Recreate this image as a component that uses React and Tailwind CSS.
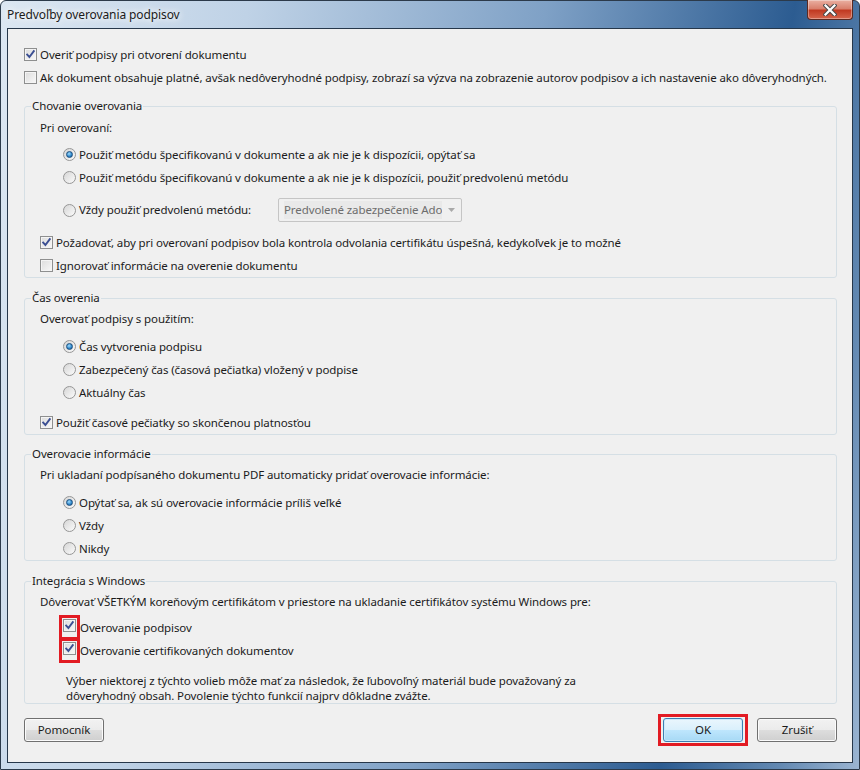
import React from 'react';

const Checkbox = ({ checked }) => (
  <span className="relative inline-block w-[13px] h-[13px] shrink-0 border border-[#8e8f8f] bg-[linear-gradient(135deg,#dcdcdc,#f8f8f8)] shadow-[inset_0_0_0_1px_#f4f4f4]">
    {checked && (
      <svg className="absolute left-0 top-0" width="11" height="11" viewBox="0 0 11 11">
        <path d="M2.2 5.6 L4.4 8 L8.8 2.2" fill="none" stroke="#3b4f93" strokeWidth="1.9" strokeLinecap="square" />
      </svg>
    )}
  </span>
);

const Radio = ({ checked }) => (
  <span className="relative inline-flex items-center justify-center w-[13px] h-[13px] shrink-0 rounded-full border border-[#969696] bg-[linear-gradient(135deg,#d6d6d6,#fbfbfb)]">
    {checked && (
      <span className="w-[7px] h-[7px] rounded-full border border-[#1c4f7e] bg-[radial-gradient(circle_at_40%_35%,#9fdcff,#2d85c8_60%,#15538f)]" />
    )}
  </span>
);

const Row = ({ children, className = '' }) => (
  <div className={`flex items-center h-[23px] whitespace-nowrap ${className}`}>{children}</div>
);

const CheckRow = ({ checked, label, className = '' }) => (
  <Row className={className}>
    <Checkbox checked={checked} />
    <span className="ml-[3px]">{label}</span>
  </Row>
);

const RadioRow = ({ checked, label, className = '' }) => (
  <Row className={`pl-[23px] ${className}`}>
    <Radio checked={checked} />
    <span className="ml-[3px]">{label}</span>
  </Row>
);

const Group = ({ title, children, className = '' }) => (
  <fieldset className={`border border-[#d5dfe5] rounded-[3px] pl-[15px] ${className}`}>
    <legend className="ml-[-9px] px-[1px] leading-[16px]">{title}</legend>
    {children}
  </fieldset>
);

const Button = ({ children, primary }) => (
  <button
    className={
      primary
        ? 'w-[80px] h-[24px] rounded-[3px] border border-[#3c7fb1] bg-[linear-gradient(#eaf6fd_0%,#d9f0fc_50%,#bee6fd_51%,#a7d9f5_100%)] shadow-[inset_0_0_0_1px_#cbeafc] text-[#1b1b1b]'
        : 'w-[80px] h-[24px] rounded-[3px] border border-[#707070] bg-[linear-gradient(#f2f2f2_0%,#ebebeb_50%,#dddddd_51%,#cfcfcf_100%)] shadow-[inset_0_0_0_1px_#fbfbfb] text-[#1b1b1b]'
    }
  >
    {children}
  </button>
);

export default function App() {
  return (
    <div className="w-[860px] h-[770px] flex flex-col font-['Noto_Sans',sans-serif] text-[11.5px] tracking-[-0.1px] text-[#1b1b1b] bg-[linear-gradient(100deg,#dce7f2_0%,#bfd2e6_25%,#7fa1c6_55%,#2c5c91_80%,#6389b2_92%,#9bb5d2_100%)] border border-[#2c3a4a] rounded-t-[6px]">
      {/* Title bar */}
      <div className="relative h-[27px] flex items-center pl-[6px]">
        <span className="text-[12px] [text-shadow:0_0_6px_#fff,0_0_10px_#fff]">Predvoľby overovania podpisov</span>
        <div className="absolute right-[6px] top-[-1px] w-[46px] h-[20px] rounded-b-[4px] border border-[#5b2a22] border-t-0 bg-[linear-gradient(#eab0a2_0%,#d9806d_45%,#c13a22_55%,#d5654c_100%)] shadow-[inset_0_0_0_1px_rgba(255,255,255,0.35)] flex items-center justify-center">
          <svg width="14" height="12" viewBox="0 0 14 12">
            <path d="M2.5 1.5 L11.5 10.5 M11.5 1.5 L2.5 10.5" stroke="#4a4a4a" strokeWidth="4.2" strokeLinecap="square" />
            <path d="M2.5 1.5 L11.5 10.5 M11.5 1.5 L2.5 10.5" stroke="#ffffff" strokeWidth="2.2" strokeLinecap="square" />
          </svg>
        </div>
      </div>

      {/* Client area */}
      <div className="flex-1 mx-[6px] mb-[6px] border border-[#26374a] bg-[#f0f0f0] flex flex-col pt-[14px] pl-[16px] pr-[15px]">
        <CheckRow checked label="Overiť podpisy pri otvorení dokumentu" />
        <CheckRow label="Ak dokument obsahuje platné, avšak nedôveryhodné podpisy, zobrazí sa výzva na zobrazenie autorov podpisov a ich nastavenie ako dôveryhodných." />

        <Group title="Chovanie overovania" className="mt-[9px]">
          <Row className="mt-[2px]">Pri overovaní:</Row>
          <RadioRow checked className="mt-[4px]" label="Použiť metódu špecifikovanú v dokumente a ak nie je k dispozícii, opýtať sa" />
          <RadioRow label="Použiť metódu špecifikovanú v dokumente a ak nie je k dispozícii, použiť predvolenú metódu" />
          <div className="flex items-center h-[24px] mt-[9px] pl-[23px] whitespace-nowrap">
            <Radio />
            <span className="ml-[3px] w-[199px]">Vždy použiť predvolenú metódu:</span>
            <div className="w-[184px] h-[24px] rounded-[2px] border border-[#c5c5c5] bg-[#f0f0f0] flex items-center pl-[5px] pr-[6px] text-[#6d6d6d]">
              <span className="flex-1 overflow-hidden bg-[#e9e9e9]">Predvolené zabezpečenie Ado</span>
              <svg className="ml-[6px]" width="7" height="4" viewBox="0 0 7 4">
                <path d="M0 0 L7 0 L3.5 4 Z" fill="#a9a9a9" />
              </svg>
            </div>
          </div>
          <CheckRow checked className="mt-[9px]" label="Požadovať, aby pri overovaní podpisov bola kontrola odvolania certifikátu úspešná, kedykoľvek je to možné" />
          <CheckRow label="Ignorovať informácie na overenie dokumentu" />
        </Group>

        <Group title="Čas overenia" className="mt-[12px]">
          <Row className="mt-[1px]">Overovať podpisy s použitím:</Row>
          <RadioRow checked className="mt-[5px]" label="Čas vytvorenia podpisu" />
          <RadioRow label="Zabezpečený čas (časová pečiatka) vložený v podpise" />
          <RadioRow label="Aktuálny čas" />
          <CheckRow checked className="mt-[7px] h-[22px]" label="Použiť časové pečiatky so skončenou platnosťou" />
        </Group>

        <Group title="Overovacie informácie" className="mt-[11px]">
          <Row className="mt-[1px]">Pri ukladaní podpísaného dokumentu PDF automaticky pridať overovacie informácie:</Row>
          <RadioRow checked className="mt-[5px]" label="Opýtať sa, ak sú overovacie informácie príliš veľké" />
          <RadioRow label="Vždy" />
          <RadioRow className="h-[20px]" label="Nikdy" />
        </Group>

        <Group title="Integrácia s Windows" className="mt-[12px]">
          <Row className="mt-[1px]">Dôverovať VŠETKÝM koreňovým certifikátom v priestore na ukladanie certifikátov systému Windows pre:</Row>
          <Row className="mt-[3px] pl-[19px]">
            <span className="border-[3px] border-[#e21b23] p-px">
              <Checkbox checked />
            </span>
            <span>Overovanie podpisov</span>
          </Row>
          <Row className="pl-[19px]">
            <span className="border-[3px] border-[#e21b23] p-px">
              <Checkbox checked />
            </span>
            <span>Overovanie certifikovaných dokumentov</span>
          </Row>
          <p className="mt-[11px] ml-[26px] leading-[15px] whitespace-nowrap">
            Výber niektorej z týchto volieb môže mať za následok, že ľubovoľný materiál bude považovaný za
            <br />
            dôveryhodný obsah. Povolenie týchto funkcií najprv dôkladne zvážte.
          </p>
        </Group>

        <div className="flex items-center mt-[10px]">
          <Button>Pomocník</Button>
          <div className="ml-auto border-[3px] border-[#e21b23] px-[2px] py-px">
            <Button primary>OK</Button>
          </div>
          <div className="ml-[9px]">
            <Button>Zrušiť</Button>
          </div>
        </div>
      </div>
    </div>
  );
}
